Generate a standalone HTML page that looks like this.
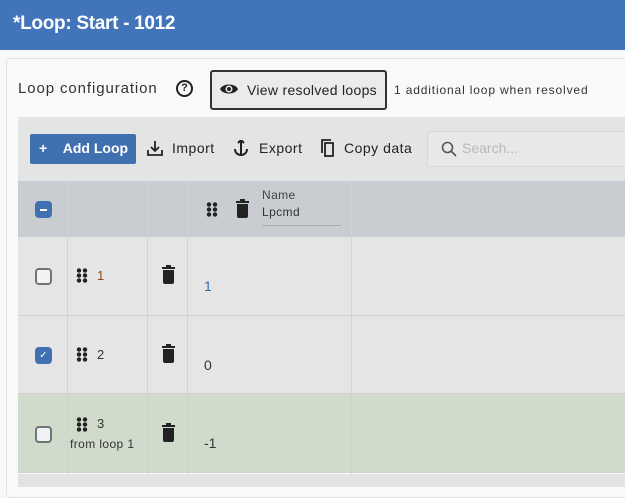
<!DOCTYPE html><html><head><style>
*{box-sizing:border-box;margin:0;padding:0}
body{width:625px;height:487px;overflow:hidden;background:#f7f8fa;font-family:"Liberation Sans",sans-serif;position:relative;color:#222}
.a{position:absolute}
.hdr{left:0;top:0;width:625px;height:50px;background:#4174b8;color:#fff;font-weight:bold;font-size:19px;padding:13px 0 0 13px;letter-spacing:-0.3px}
.panel{left:6px;top:58px;width:630px;height:440px;border:1px solid #e2e3e5;border-radius:4px;background:#f8f9fa}
.tb{left:18px;top:117px;width:610px;height:64px;background:#e3e4e4}
.th{left:18px;top:181px;width:610px;height:56px;background:#c9ccd0}
.row{left:18px;width:610px;background:#e5e5e5;border-bottom:1px solid #d2d2d2}
.vl{width:1px;background:#d2d2d2}
.cb{width:17px;height:17px;border:2px solid #6f747b;border-radius:4px;background:#f2f2f2}
.dots{width:12px;height:15px;background:radial-gradient(circle,#222 2px,transparent 2.4px) 0 0/6px 5px}
.tr{width:11px;height:14px;background:#222;border-radius:0 0 2px 2px}
.tr:before{content:"";position:absolute;left:-1px;top:-3px;width:13px;height:2px;background:#222}
.tr:after{content:"";position:absolute;left:3px;top:-5px;width:5px;height:2px;background:#222}
.t{font-size:13px;color:#333}
.tl{font-size:14px;letter-spacing:0.5px}
</style></head><body>
<div class="a hdr">*Loop: Start - 1012</div>
<div class="a panel"></div>
<div class="a" style="left:18px;top:80px;font-size:15px;color:#333;letter-spacing:0.9px">Loop configuration</div>
<div class="a" style="left:176px;top:80px;width:17px;height:17px;border:2px solid #222;border-radius:50%;font-size:11px;font-weight:bold;text-align:center;line-height:13px">?</div>
<div class="a" style="left:210px;top:70px;width:177px;height:40px;border:2px solid #333;border-radius:3px;background:#ebebeb;font-size:14px;padding:10px 0 0 35px;color:#222;letter-spacing:0.3px;white-space:nowrap">View resolved loops</div>
<svg class="a" style="left:219px;top:80px" width="20" height="18" viewBox="0 0 20 18"><path d="M1 9C4 3 16 3 19 9C16 15 4 15 1 9Z" fill="#222"/><circle cx="10" cy="9" r="3.5" fill="#ebebeb"/><circle cx="10" cy="9" r="2" fill="#222"/></svg>
<div class="a" style="left:394px;top:83px;font-size:12px;color:#333;letter-spacing:0.85px;white-space:nowrap">1 additional loop when resolved</div>
<div class="a tb"></div>
<div class="a" style="left:30px;top:134px;width:106px;height:30px;background:#4170b0;border-radius:2px;color:#fff;font-size:14px;font-weight:bold;padding:6px 0 0 9px;white-space:nowrap">+&nbsp;&nbsp;&nbsp;&nbsp;Add Loop</div>
<svg class="a" style="left:147px;top:140px" width="16" height="17" viewBox="0 0 16 17" fill="none" stroke="#222" stroke-width="1.8"><path d="M8 1V11M4 7L8 11L12 7M1 10V15H15V10"/></svg>
<div class="a tl" style="left:172px;top:140px">Import</div>
<svg class="a" style="left:233px;top:140px" width="16" height="17" viewBox="0 0 16 17" fill="none" stroke="#222" stroke-width="2"><path d="M8 0V15M5 3L8 0L11 3M2 9C2 13 5 15 8 15C11 15 14 13 14 9"/></svg>
<div class="a tl" style="left:259px;top:140px">Export</div>
<svg class="a" style="left:319px;top:139px" width="16" height="19" viewBox="0 0 16 19" fill="none" stroke="#222" stroke-width="1.8"><path d="M3 14V1H12"/><rect x="6" y="4" width="8" height="13"/></svg>
<div class="a tl" style="left:344px;top:140px">Copy data</div>
<div class="a" style="left:427px;top:131px;width:210px;height:36px;border:1px solid #d6d6d6;border-radius:3px;background:#e8e8e8;font-size:14px;color:#b8b8b8;padding:8px 0 0 34px">Search...</div>
<svg class="a" style="left:441px;top:141px" width="16" height="16" viewBox="0 0 16 16" fill="none" stroke="#555" stroke-width="1.6"><circle cx="6.5" cy="6.5" r="5"/><path d="M10 10L15 15"/></svg>
<div class="a th"></div>
<div class="a row" style="top:237px;height:79px"></div>
<div class="a row" style="top:316px;height:78px"></div>
<div class="a row" style="top:394px;height:79px;background:#d0dbcb"></div>
<div class="a" style="left:18px;top:474px;width:610px;height:13px;background:#e2e3e3"></div>
<div class="a vl" style="left:67px;top:181px;height:293px"></div>
<div class="a vl" style="left:147px;top:181px;height:293px"></div>
<div class="a vl" style="left:187px;top:181px;height:293px"></div>
<div class="a vl" style="left:351px;top:181px;height:293px"></div>
<div class="a" style="left:35px;top:201px;width:17px;height:17px;background:#4170b0;border-radius:4px"><div class="a" style="left:5px;top:8px;width:7px;height:2px;background:#fff"></div></div>
<div class="a dots" style="left:206px;top:202px"></div>
<div class="a tr" style="left:237px;top:204px"></div>
<div class="a" style="left:262px;top:188px;font-size:12px;color:#444;letter-spacing:0.4px">Name</div>
<div class="a" style="left:262px;top:205px;font-size:12px;color:#333;width:79px;border-bottom:1px solid #aaa;padding-bottom:6px;letter-spacing:0.4px">Lpcmd</div>
<div class="a cb" style="left:35px;top:268px"></div>
<div class="a dots" style="left:76px;top:268px"></div><div class="a t" style="left:97px;top:268px;color:#8a4a1a">1</div>
<div class="a tr" style="left:163px;top:270px"></div>
<div class="a t" style="left:204px;top:278px;color:#2a6fb0;font-size:14px">1</div>
<div class="a" style="left:35px;top:347px;width:17px;height:17px;background:#4170b0;border-radius:4px;color:#fff;font-size:10px;text-align:center;line-height:17px">✓</div>
<div class="a dots" style="left:76px;top:347px"></div><div class="a t" style="left:97px;top:347px">2</div>
<div class="a tr" style="left:163px;top:349px"></div>
<div class="a t" style="left:204px;top:357px;font-size:14px">0</div>
<div class="a cb" style="left:35px;top:426px"></div>
<div class="a dots" style="left:76px;top:417px"></div><div class="a t" style="left:97px;top:416px">3</div>
<div class="a" style="left:70px;top:437px;font-size:12px;color:#333;letter-spacing:0.4px">from loop 1</div>
<div class="a tr" style="left:163px;top:428px"></div>
<div class="a t" style="left:204px;top:435px;font-size:14px">-1</div>
</body></html>
